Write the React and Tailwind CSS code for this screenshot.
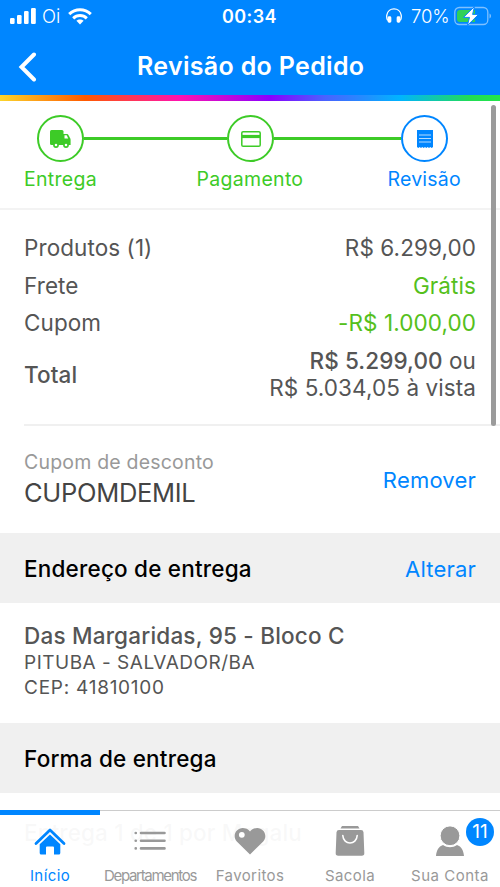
function StatusBar() {
  return (
    <div className="flex h-8 shrink-0 items-center text-white">
      <svg className="ml-[10px] h-4 w-[26px]" viewBox="0 0 26 16" fill="currentColor">
        <rect x="0" y="10" width="4.6" height="6" rx="1.2" />
        <rect x="7" y="7" width="4.6" height="9" rx="1.2" />
        <rect x="14" y="3" width="4.6" height="13" rx="1.2" />
        <rect x="21" y="0" width="4.8" height="16" rx="1.2" />
      </svg>
      <span className="ml-[6px] w-[20px] pt-px text-[18.5px] font-light">Oi</span>
      <svg className="ml-[6px] h-[17px] w-[24px]" viewBox="0 0 24 17" fill="none" stroke="currentColor" strokeWidth="3">
        <path d="M1.2 6.2C7.2.4 16.8.4 22.8 6.2" />
        <path d="M5.2 10.3C9 6.7 15 6.7 18.8 10.3" />
        <path d="M8.4 12.8C10.4 11 13.6 11 15.6 12.8L12 16.6Z" fill="currentColor" stroke="none" />
      </svg>
      <span className="ml-[130px] w-[56px] text-[18px] font-semibold tracking-[0.4px]">00:34</span>
      <svg className="ml-[108px] h-4 w-4" viewBox="0 0 16 16" fill="none" stroke="currentColor" strokeWidth="1.3">
        <path d="M1.7 12.5C.5 10.5.6 8.600.8 7.200 2-1.200 14-1.200 15.200 7.200c.2 1.400.3 3.300-.9 5.300" />
        <rect x="2.300" y="9" width="2.400" height="5" rx=".8" fill="currentColor" />
        <rect x="11.300" y="9" width="2.400" height="5" rx=".8" fill="currentColor" />
      </svg>
      <span className="ml-[9px] w-[39px] pt-px text-[18.5px] font-light tracking-[-0.1px]">70%</span>
      <svg className="ml-[4px] h-[20px] w-[38px]" viewBox="0 0 38 20">
        <rect x=".8" y="1.500" width="33" height="17" rx="4.500" fill="none" stroke="#7fc0ff" strokeWidth="1.300" />
        <path d="M35.500 7.500c2 .8 2 4.200 0 5z" fill="#7fc0ff" />
        <path d="M6 4h15v12H6a3 3 0 0 1-3-3V7a3 3 0 0 1 3-3z" fill="#30d158" />
        <path d="M20.500.5 9.500 11.400h6L13.400 19.500 24.600 8.400h-6z" fill="white" stroke="#0a86ff" strokeWidth="1" />
      </svg>
    </div>
  );
}

function Header() {
  return (
    <header className="flex h-[101px] shrink-0 flex-col bg-[#0086ff]">
      <StatusBar />
      <div className="flex flex-1 items-center text-white">
        <svg className="mt-[6px] ml-[18px] h-[30px] w-[19px]" viewBox="0 0 19 30" fill="none" stroke="currentColor" strokeWidth="4" strokeLinecap="round" strokeLinejoin="miter">
          <path d="M16 2.500 3.500 15 16 27.500" />
        </svg>
        <h1 className="mt-[7px] ml-[100px] text-[25px] font-semibold tracking-[0.32px] whitespace-nowrap">Revisão do Pedido</h1>
      </div>
      <div className="h-[6px] bg-[linear-gradient(90deg,#fbd52c_0%,#ff5a00_17%,#ff12b0_36%,#8a00ff_54%,#4a62ff_65%,#00b4ff_80%,#22dd55_94%,#22e64a_100%)]" />
    </header>
  );
}

function Circle({ children, color }) {
  return <div className={"flex size-[47px] shrink-0 items-center justify-center rounded-full border-2 " + color}>{children}</div>;
}

function Steps() {
  return (
    <section className="h-[109px] shrink-0 border-b-2 border-[#f3f3f3] bg-white pt-[14px]">
      <div className="flex items-center pl-[37px] text-[#3dcb27]">
        <Circle color="border-[#3dcb27]">
          <svg className="h-[18px] w-[21px]" viewBox="0 0 21 18" fill="currentColor">
            <rect x="0" y="0" width="13.500" height="15" rx="1.500" />
            <path d="M12 4h4.500c1 0 1.700.5 2.200 1.400l1.500 2.800c.3.600.4 1 .4 1.700V15H12z" />
            <path d="M14.500 5.300h2.200l1.500 3.200h-3.700z" fill="white" />
            <circle cx="6" cy="15" r="2.100" stroke="currentColor" strokeWidth="1.600" fill="white" />
            <circle cx="16" cy="15" r="2.100" stroke="currentColor" strokeWidth="1.600" fill="white" />
          </svg>
        </Circle>
        <div className="h-[3px] w-[143px] bg-current" />
        <Circle color="border-[#3dcb27]">
          <svg className="h-[16px] w-[20px]" viewBox="0 0 20 16" fill="none" stroke="currentColor">
            <rect x=".8" y=".8" width="18.400" height="14.400" rx="1.300" strokeWidth="1.500" />
            <path d="M1 5.500h18" strokeWidth="3.200" />
          </svg>
        </Circle>
        <div className="h-[3px] w-[127px] bg-current" />
        <Circle color="border-[#0086ff] text-[#0086ff]">
          <svg className="h-[18px] w-[16px]" viewBox="0 0 16 18">
            <path d="M0 0h16v17l-1.300 1-1.400-1-1.300 1-1.300-1-1.400 1L8 17l-1.300 1-1.400-1L4 18l-1.300-1-1.400 1L0 17z" fill="currentColor" />
            <path d="M2 5h12M2 8.500h12M2 12h12" stroke="#b5dcff" strokeWidth="1.200" />
          </svg>
        </Circle>
      </div>
      <div className="mt-[4px] flex text-[19.5px] leading-[26px] whitespace-nowrap text-[#3dcb27]">
        <span className="ml-[24px] w-[172.500px] tracking-[0.3px]">Entrega</span>
        <span className="w-[191px] tracking-[0.3px]">Pagamento</span>
        <span className="tracking-[0.2px] text-[#0086ff]">Revisão</span>
      </div>
    </section>
  );
}

function Row({ label, value, className = "" }) {
  return (
    <div className="flex h-[37.5px] items-center justify-between">
      <span>{label}</span>
      <span className={className}>{value}</span>
    </div>
  );
}

function Summary() {
  return (
    <section className="ml-6 flex h-[216px] shrink-0 flex-col border-b-2 border-[#f0f0f0] pt-[19px] pr-6 text-[22.500px] leading-[27px] tracking-[0.08px] text-[#555]">
      <Row label="Produtos (1)" value="R$ 6.299,00" />
      <Row label="Frete" value="Grátis" className="text-[#55c01c]" />
      <Row label="Cupom" value="-R$ 1.000,00" className="text-[#55c01c]" />
      <div className="mt-[5px] flex items-center justify-between">
        <span className="pt-px font-medium">Total</span>
        <div className="text-right">
          <p><span className="font-medium">R$ 5.299,00</span> ou</p>
          <p>R$ 5.034,05 à vista</p>
        </div>
      </div>
    </section>
  );
}

function Coupon() {
  return (
    <section className="flex h-[107px] shrink-0 items-center justify-between px-6">
      <div>
        <p className="text-[19.5px] leading-[26px] tracking-[0.2px] text-[#999]">Cupom de desconto</p>
        <p className="text-[25.500px] leading-[36px] tracking-[-0.3px] text-[#444]">CUPOMDEMIL</p>
      </div>
      <span className="pt-px text-[22px] tracking-[0.2px] text-[#0086ff]">Remover</span>
    </section>
  );
}

function SectionTitle({ title, action }) {
  return (
    <div className="flex h-[70px] shrink-0 items-center justify-between bg-[#f0f0f0] px-6 pt-px text-[22.500px] tracking-[0.2px]">
      <h2 className="font-medium text-black">{title}</h2>
      <span className="pt-px text-[22px] text-[#0086ff]">{action}</span>
    </div>
  );
}

function Tab({ label, active, className = "", children }) {
  return (
    <div className={"flex w-[100px] shrink-0 flex-col items-center border-t-[5px] " + (active ? "border-[#0086ff] text-[#0086ff]" : "border-transparent text-[#999]")}>
      <div className="mt-[10px] flex h-[32px] items-center justify-center">{children}</div>
      <span className={"mt-[8px] text-[15px] leading-[22px] whitespace-nowrap " + className}>{label}</span>
    </div>
  );
}

function TabBar() {
  return (
    <nav className="absolute inset-x-0 bottom-0 flex h-[77px] bg-white/96 shadow-[inset_0_1px_0_#ccc]">
      <Tab label="Início" active className="tracking-[0.4px]">
        <svg className="h-[28px] w-[32px]" viewBox="0 0 32 28" fill="currentColor">
          <path d="M2 16.500 16 3l14 13.500" fill="none" stroke="currentColor" strokeWidth="2.800" strokeLinecap="round" strokeLinejoin="round" />
          <path d="M16 7.500 26.300 17.200V26a1.500 1.500 0 0 1-1.500 1.500H20V20.500a1 1 0 0 0-1-1h-6a1 1 0 0 0-1 1v7H7.200A1.500 1.500 0 0 1 5.700 26v-8.800z" />
        </svg>
      </Tab>
      <Tab label="Departamentos" className="tracking-[-1.300px]">
        <svg className="h-[20px] w-[32px]" viewBox="0 0 32 20" stroke="currentColor" strokeWidth="2.600" strokeLinecap="round">
          <path d="M1.700 2h.1M1.700 9.700h.1M1.700 17.400h.1M7 2h23.500M7 9.700h23.500M7 17.400h23.500" />
        </svg>
      </Tab>
      <Tab label="Favoritos" className="tracking-[0.4px]">
        <svg className="h-[28px] w-[32px]" viewBox="0 0 32 28">
          <path d="M16 27.500 2.800 14.500C-3 7.500 4-1.500 12 1.600c1.700.6 3 1.700 4 3 1-1.300 2.300-2.400 4-3C28-1.500 35 7.500 29.200 14.500z" fill="currentColor" />
          <circle cx="7.800" cy="7.800" r="2.900" fill="white" />
        </svg>
      </Tab>
      <Tab label="Sacola" className="tracking-[0.400px]">
        <svg className="h-[30px] w-[30px]" viewBox="0 0 30 30">
          <path d="M7 0h16l1.500 2.500h-19z" fill="currentColor" />
          <path d="M4 4h22a2.500 2.500 0 0 1 2.500 2.300L29.300 27a2.500 2.500 0 0 1-2.500 2.700H3.200A2.500 2.500 0 0 1 .7 27L1.500 6.300A2.500 2.500 0 0 1 4 4z" fill="currentColor" />
          <path d="M7.800 9.500c.6 10 13.800 10 14.400 0" fill="none" stroke="white" strokeWidth="1.600" strokeLinecap="round" />
        </svg>
      </Tab>
      <div className="relative">
        <Tab label="Sua Conta" className="tracking-[0.5px]">
          <svg className="h-[30px] w-[30px]" viewBox="0 0 30 30" fill="currentColor">
            <path d="M8 19c4.500 3 9.500 3 14 0 4.500 1.500 6.500 5.500 7 11H1c.5-5.500 2.500-9.500 7-11z" />
            <circle cx="15" cy="9.800" r="9.900" stroke="white" strokeWidth="1" />
          </svg>
        </Tab>
        <span className="absolute top-[8px] left-[66px] flex size-[28px] items-center justify-center rounded-full bg-[#0086ff] text-[19px] text-white">11</span>
      </div>
    </nav>
  );
}

export default function App() {
  return (
    <div className="relative flex h-[887px] w-[500px] flex-col overflow-hidden bg-white font-['Inter',sans-serif]">
      <Header />
      <Steps />
      <Summary />
      <Coupon />
      <SectionTitle title="Endereço de entrega" action="Alterar" />
      <section className="h-[120px] shrink-0 px-6 pt-[19px] text-[19px] leading-[25px] text-[#555]">
        <p className="mb-px text-[22.500px] leading-[27px] font-medium tracking-[0.200px]">Das Margaridas, 95 - Bloco C</p>
        <p className="tracking-[0.500px]">PITUBA - SALVADOR/BA</p>
        <p className="tracking-[0.750px]">CEP: 41810100</p>
      </section>
      <SectionTitle title="Forma de entrega" />
      <section className="shrink-0 px-6 pt-[26px] text-[22.500px] leading-[27px] tracking-[0.150px] text-[#555]">
        <p className="font-medium">Entrega 1 de 1 por Magalu</p>
      </section>
      <div className="absolute top-[105px] right-[4px] h-[321px] w-[5px] rounded-full bg-[#9b9b9b]" />
      <TabBar />
    </div>
  );
}
